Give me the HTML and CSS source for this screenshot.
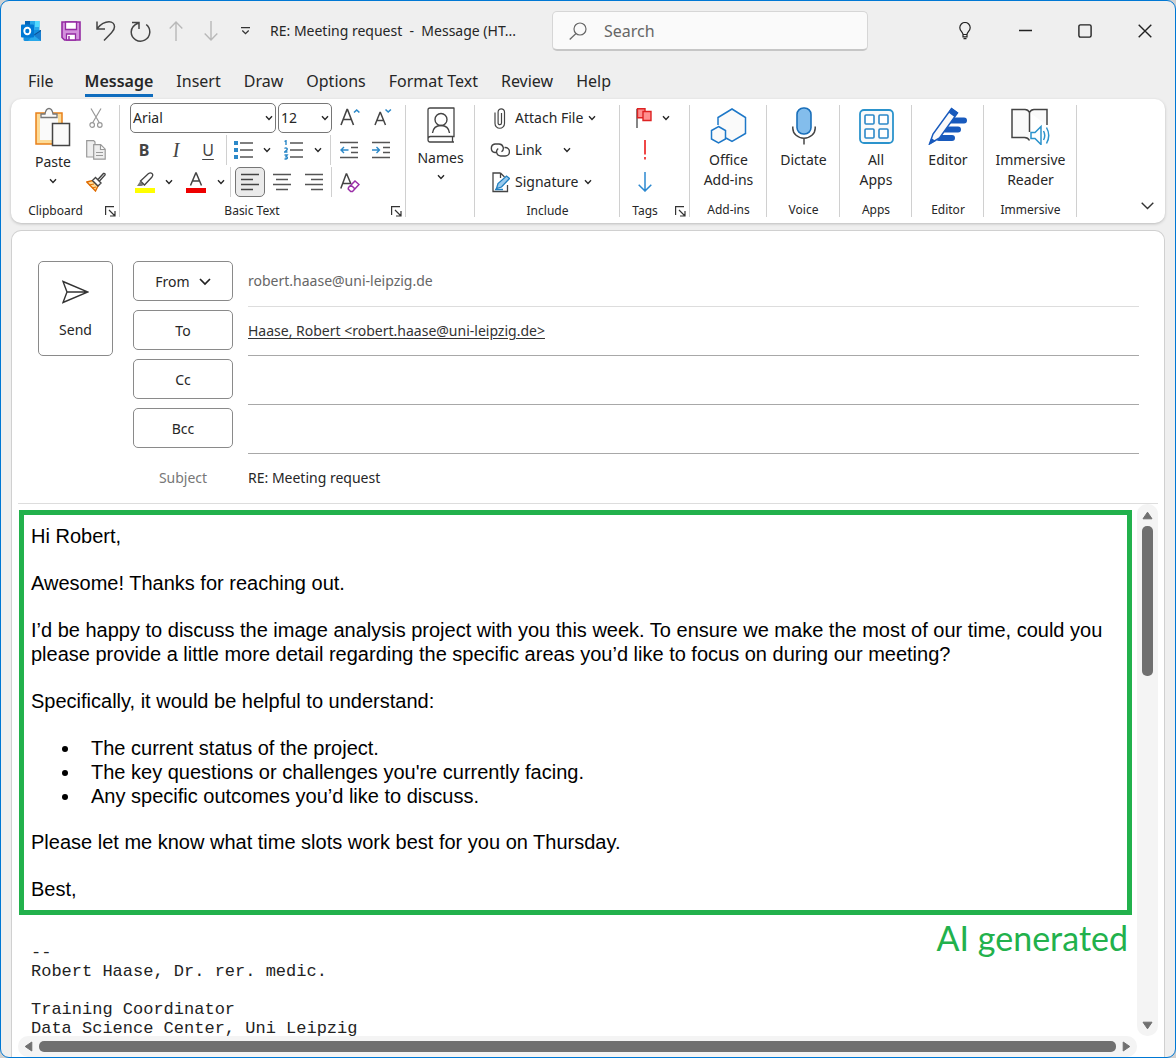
FILE: index.html
```html
<!DOCTYPE html>
<html lang="en">
<head>
<meta charset="utf-8">
<title>RE: Meeting request - Message (HTML)</title>
<meta name="viewport" content="width=device-width, initial-scale=1">
<link rel="stylesheet" href="styles.css">
</head>
<body>
<svg class="defs" aria-hidden="true">
  <symbol id="chev" viewBox="0 0 8 6"><path d="M1 1.2 4 4.4 7 1.2" fill="none" stroke="currentColor" stroke-width="1.4"/></symbol>
  <symbol id="launch" viewBox="0 0 11 11"><path d="M.6 9V.6H9M4 4l5.500 5.500M10 5v5H5" fill="none" stroke="#333" stroke-width="1.200"/></symbol>
</svg>
<div class="window">
  <header class="titlebar">
    <span class="app-icon"><svg width="20" height="20" viewBox="0 0 20 20"><path d="M4 1Q4 0 5 0H18.500V10H4z" fill="#28a8ea"/><path d="M4 0H9V5H4z" fill="#0364b8"/><path d="M14 0h4.500v6H14z" fill="#50d9ff"/><path d="M2.500 9H20V20H4Q2.500 20 2.500 18.500z" fill="#1490df"/><path d="M20 9 12 14 20 20z" fill="#1a7fd0"/><path d="M13 13.500 20 9v1l-6 4z" fill="#0a4f91"/><path d="M12 14 20 20H7z" fill="#28a8ea"/><rect y="3.500" width="13" height="13" rx="1" fill="#0078d4"/><ellipse cx="6.300" cy="10" rx="3" ry="3.300" fill="none" stroke="#fff" stroke-width="1.900"/></svg></span>
    <button class="qat" aria-label="Save"><svg width="20" height="20" viewBox="0 0 20 20"><path d="M1 1H19V19H3.500L1 16.500z" fill="#d391dc" stroke="#952ba3" stroke-width="1.600"/><path d="M4.500 1H15.500V8.500H4.500zM5.500 19V13H14.500V19z" fill="#fff" stroke="#952ba3" stroke-width="1.300"/><path d="M8 15v4" stroke="#952ba3" stroke-width="1.500"/></svg></button>
    <button class="qat" aria-label="Undo"><svg width="20" height="20" viewBox="0 0 20 20"><path d="M1 .5V8H9M1.200 7.500C5 3 9 .8 13 .8c3.500 0 5.500 2.500 5.500 5 0 3-1.500 4.500-3 6L8 19.500" fill="none" stroke="#444" stroke-width="1.500"/></svg></button>
    <button class="qat" aria-label="Redo"><svg width="22" height="21" viewBox="0 0 22 21"><path d="M2 1.500H9V8M8.500 2C3.500 4 1.200 7 1.200 11a9.300 9.300 0 1 0 15-7.500" fill="none" stroke="#444" stroke-width="1.500"/></svg></button>
    <button class="qat" aria-label="Previous item"><svg width="14" height="20" viewBox="0 0 14 20"><path d="M7 20V1M.7 7.500 7 1l6.300 6.500" fill="none" stroke="#b8b8b8" stroke-width="1.400"/></svg></button>
    <button class="qat" aria-label="Next item"><svg width="14" height="20" viewBox="0 0 14 20"><path d="M7 0v19M.7 12.500 7 19l6.300-6.500" fill="none" stroke="#b8b8b8" stroke-width="1.400"/></svg></button>
    <button class="qat" aria-label="Customize toolbar"><svg width="9" height="8" viewBox="0 0 9 8"><path d="M0 .7H9M1.300 3.500 4.500 6.700 7.700 3.500" fill="none" stroke="#333" stroke-width="1.300"/></svg></button>
    <h1 class="title">RE: Meeting request&nbsp; -&nbsp; Message (HT...</h1>
    <label class="search"><svg width="18" height="18" viewBox="0 0 18 18"><circle cx="11" cy="7" r="6" fill="none" stroke="#666" stroke-width="1.200"/><path d="M7 11.500.7 17.500" stroke="#666" stroke-width="1.200"/></svg><input type="text" placeholder="Search" aria-label="Search"></label>
    <nav class="wincontrols" aria-label="Window">
      <button aria-label="Tips"><svg width="12" height="18" viewBox="0 0 12 18"><path d="M4 12.500C4 10 .8 9 .8 5.700a5.200 5.200 0 0 1 10.400 0C11.200 9 8 10 8 12.500zM4 12.500v2.300h4v-2.300M4.500 16.700h3" fill="none" stroke="#222" stroke-width="1.200"/></svg></button>
      <button aria-label="Minimize"><svg width="13" height="14" viewBox="0 0 13 14"><path d="M0 6.500H13" stroke="#222" stroke-width="1.400"/></svg></button>
      <button aria-label="Maximize"><svg width="14" height="14" viewBox="0 0 14 14"><rect x=".9" y=".9" width="12.200" height="12.200" rx="1.500" fill="none" stroke="#222" stroke-width="1.400"/></svg></button>
      <button aria-label="Close"><svg width="14" height="14" viewBox="0 0 14 14"><path d="M.7.7 13.300 13.300M13.300.7.7 13.300" stroke="#222" stroke-width="1.400"/></svg></button>
    </nav>
  </header>

  <nav class="tabs" aria-label="Ribbon tabs">
    <a class="tab file" href="#file">File</a>
    <a class="tab active" href="#message">Message</a>
    <a class="tab" href="#insert">Insert</a>
    <a class="tab" href="#draw">Draw</a>
    <a class="tab" href="#options">Options</a>
    <a class="tab" href="#format">Format Text</a>
    <a class="tab" href="#review">Review</a>
    <a class="tab" href="#help">Help</a>
  </nav>

  <section class="ribbon" aria-label="Message ribbon">
    <div class="group clipboard">
      <div class="group-body">
        <button class="big"><span class="ico"><svg width="36" height="40" viewBox="0 0 36 40"><rect x="1" y="6" width="26" height="31" fill="#fddb97" stroke="#e8801a" stroke-width="1.500"/><path d="M5 9h18v24H5z" fill="#fafafa"/><path d="M6 10.500V7h4c.5-3 2-5.500 4-5.500S17.500 4 18 7h4v3.500z" fill="#fafafa" stroke="#777" stroke-width="1.300"/><rect x="17.500" y="16.500" width="17" height="22" fill="#fafafa" stroke="#444" stroke-width="1.500"/></svg></span><span>Paste</span><svg class="chev"><use href="#chev"/></svg></button>
        <div class="stack">
          <button aria-label="Cut"><svg width="14" height="20" viewBox="0 0 14 20"><path d="M2 .5 10.500 15M12 .5 3.500 15" stroke="#999" stroke-width="1.200"/><circle cx="3.200" cy="17" r="2.300" fill="none" stroke="#999" stroke-width="1.200"/><circle cx="10.800" cy="17" r="2.300" fill="none" stroke="#999" stroke-width="1.200"/></svg></button>
          <button aria-label="Copy"><svg width="20" height="20" viewBox="0 0 20 20"><path d="M.7.7h7L9 2v15H.7z" fill="#eee" stroke="#999" stroke-width="1.200"/><path d="M7.700 4.700h7l4.500 4.500v10H7.700zM14.500 5v4.500H19M10 12.500h7M10 15.500h7" fill="#eee" stroke="#999" stroke-width="1.200"/></svg></button>
          <button aria-label="Format Painter"><svg width="20" height="20" viewBox="0 0 20 20"><path d="M.8 10 6.500 8.500 12 14 9.500 19z" fill="#fddb97" stroke="#e06c00" stroke-width="1.400"/><path d="M3 13 8 12M6 16l4-1" stroke="#e06c00"/><path d="M6.500 8.500 9.500 5.500 15 11 12 14zM12 7.500 17.500 1.500q2-.5 1.500 1.500L13.500 9" fill="#fff" stroke="#444" stroke-width="1.400"/></svg></button>
        </div>
      </div>
      <footer class="group-foot"><span>Clipboard</span><button class="launch" aria-label="Clipboard options"><svg width="11" height="11"><use href="#launch"/></svg></button></footer>
    </div>

    <div class="group basic">
      <div class="group-body rows">
        <div class="row fonts">
          <span class="pick"><select aria-label="Font"><option>Arial</option></select><svg class="chev"><use href="#chev"/></svg></span>
          <span class="pick"><select aria-label="Font size"><option>12</option></select><svg class="chev"><use href="#chev"/></svg></span>
          <button aria-label="Grow font"><svg width="20" height="20" viewBox="0 0 20 20"><path d="M1 17 7 1.500h.5L13.500 17M3.200 11.500h8" fill="none" stroke="#444" stroke-width="1.600"/><path d="M14 4.500 16.700 2l2.700 2.500" fill="none" stroke="#2b88c8" stroke-width="1.600"/></svg></button>
          <button class="shrink" aria-label="Shrink font"><svg width="18" height="20" viewBox="0 0 18 20"><path d="M1 17 6 4.500h.4L11.500 17M2.800 12.500h7" fill="none" stroke="#444" stroke-width="1.500"/><path d="M11.500 1.500 14.200 4l2.700-2.500" fill="none" stroke="#2b88c8" stroke-width="1.600"/></svg></button>
        </div>
        <div class="row marks">
          <button class="letter bold">B</button>
          <button class="letter italic">I</button>
          <button class="letter under">U</button>
          <i class="sep"></i>
          <button aria-label="Bullets"><svg width="20" height="20" viewBox="0 0 20 20"><path d="M0 1h4v4H0zM0 8h4v4H0zM0 15h4v4H0z" fill="#2b88c8"/><path d="M6 3h13M6 10h13M6 17h13" stroke="#555" stroke-width="1.400"/></svg></button>
          <button aria-label="Bullet styles"><svg class="chev"><use href="#chev"/></svg></button>
          <button aria-label="Numbering"><svg width="20" height="20" viewBox="0 0 20 20"><path d="M.5 1.500 2 .7V5M.5 8.500q1.500-1.300 2.500 0T.5 12H3.500M.5 15h2.700L2 16.700q1.500 0 1.400 1.200T.5 19" fill="none" stroke="#2b88c8" stroke-width="1.400"/><path d="M6 3h13M6 10h13M6 17h13" stroke="#555" stroke-width="1.400"/></svg></button>
          <button aria-label="Numbering styles"><svg class="chev"><use href="#chev"/></svg></button>
          <i class="sep"></i>
          <button aria-label="Decrease indent"><svg width="18" height="18" viewBox="0 0 18 18"><path d="M0 1.500h18M11 6.500h7M11 11.500h7M0 16.500h18" stroke="#555" stroke-width="1.400"/><path d="M8.500 9H1M4 6 1 9l3 3" fill="none" stroke="#2b88c8" stroke-width="1.400"/></svg></button>
          <button aria-label="Increase indent"><svg width="18" height="18" viewBox="0 0 18 18"><path d="M0 1.500h18M11 6.500h7M11 11.500h7M0 16.500h18" stroke="#555" stroke-width="1.400"/><path d="M0 9h7.500M4.500 6l3 3-3 3" fill="none" stroke="#2b88c8" stroke-width="1.400"/></svg></button>
        </div>
        <div class="row aligns">
          <button aria-label="Highlight"><svg width="20" height="21" viewBox="0 0 20 21"><path d="M0 16h20v5H0z" fill="#ff0"/><path d="M2 14 5 9.500 9 13 6.500 14z" fill="#777"/><path d="M5.500 9 13.500 1.500q2-1.300 3.500 0t0 3.500L9.500 13z" fill="#fff" stroke="#444" stroke-width="1.300"/></svg></button>
          <button aria-label="Highlight colors"><svg class="chev"><use href="#chev"/></svg></button>
          <button aria-label="Font color"><svg width="20" height="21" viewBox="0 0 20 21"><path d="M0 16h20v5H0z" fill="#e00"/><path d="M4.500 13.500 9.800 1h.4l5.300 12.500M6.500 9h7" fill="none" stroke="#444" stroke-width="1.500"/></svg></button>
          <button aria-label="Font colors"><svg class="chev"><use href="#chev"/></svg></button>
          <i class="sep"></i>
          <button class="pressed" aria-label="Align left" aria-pressed="true"><svg width="18" height="18" viewBox="0 0 18 18"><path d="M0 1.500h18M0 6.500h12M0 11.500h18M0 16.500h12" stroke="#444" stroke-width="1.400"/></svg></button>
          <button aria-label="Center"><svg width="18" height="18" viewBox="0 0 18 18"><path d="M0 1.500h18M3 6.500h12M0 11.500h18M3 16.500h12" stroke="#555" stroke-width="1.400"/></svg></button>
          <button aria-label="Align right"><svg width="18" height="18" viewBox="0 0 18 18"><path d="M0 1.500h18M6 6.500h12M0 11.500h18M6 16.500h12" stroke="#555" stroke-width="1.400"/></svg></button>
          <i class="sep"></i>
          <button aria-label="Clear formatting"><svg width="20" height="21" viewBox="0 0 20 21"><path d="M.8 16.500 6.200 2h.5L11 12M3 11.500h7" fill="none" stroke="#444" stroke-width="1.500"/><path d="m8.500 15.500 6.500-6.500 4 3.500-6.500 7h-1.800l-2.500-2.500zM11 13l4 4" fill="#fff" stroke="#9b30a8" stroke-width="1.500"/></svg></button>
        </div>
      </div>
      <footer class="group-foot"><span>Basic Text</span><button class="launch" aria-label="Basic text options"><svg width="11" height="11"><use href="#launch"/></svg></button></footer>
    </div>

    <div class="group names">
      <div class="group-body">
        <button class="big"><span class="ico"><svg width="28" height="36" viewBox="0 0 28 36"><path d="M27 1H3Q1 1 1 3v29.500Q1 35 3 35H27M27 .5V29.500H3.500Q1 29.500 1 32.300M25.500 30v5" fill="none" stroke="#444" stroke-width="1.300"/><circle cx="14" cy="12.500" r="6" fill="none" stroke="#444" stroke-width="1.400"/><path d="M5.500 26q1-7.500 8.500-7.500T22.500 26" fill="none" stroke="#444" stroke-width="1.400"/></svg></span><span>Names</span><svg class="chev"><use href="#chev"/></svg></button>
      </div>
    </div>

    <div class="group include">
      <div class="group-body rows">
        <button class="line"><svg width="20" height="21" viewBox="0 0 20 21"><path d="M5 4.500v11a4.700 4.700 0 0 0 9.500 0V4a3.200 3.200 0 0 0-6.400 0v11a1.700 1.700 0 0 0 3.400 0V5" fill="none" stroke="#444" stroke-width="1.200"/></svg><span>Attach File</span><svg class="chev"><use href="#chev"/></svg></button>
        <button class="line link"><svg width="20" height="14" viewBox="0 0 20 14"><path d="M6 9.500H5A4.300 4.300 0 0 1 5 1h4a4.300 4.300 0 0 1 2.500 7.800M14.500 4.500h.7a4.200 4.200 0 0 1 0 8.500h-4.500a4.200 4.200 0 0 1-2.500-7.500" fill="none" stroke="#444" stroke-width="1.400"/></svg><span>Link</span><svg class="chev"><use href="#chev"/></svg></button>
        <button class="line"><svg width="20" height="21" viewBox="0 0 20 21"><path d="M10.500 1H3v18.500h14.500V13M10.500 1l4 4M10.500 1v5" fill="none" stroke="#444" stroke-width="1.300"/><path d="M6.500 16.500 8 11.500 16.500 4 19.500 6.500 11.500 15z" fill="#9bcbee" stroke="#2380c0" stroke-width="1.300"/><path d="M5 17.500h8" stroke="#2380c0" stroke-width="1.400"/></svg><span>Signature</span><svg class="chev"><use href="#chev"/></svg></button>
      </div>
      <footer class="group-foot"><span>Include</span></footer>
    </div>

    <div class="group tags">
      <div class="group-body rows">
        <div class="row flagrow"><button aria-label="Follow up"><svg width="16" height="20" viewBox="0 0 16 20"><path d="M1 1v19" stroke="#444" stroke-width="1.300"/><path d="M1.500.8h7.500v9H1.500z" fill="#ff8f8f" stroke="#d22" stroke-width="1.400"/><path d="M7 3.500h8v9H7z" fill="#ff8f8f" stroke="#d22" stroke-width="1.400"/></svg></button><button aria-label="Follow up options"><svg class="chev"><use href="#chev"/></svg></button></div>
        <button class="tag" aria-label="High importance"><svg width="16" height="20" viewBox="0 0 16 20"><path d="M8 0v14.500M8 17v2.500" stroke="#e33" stroke-width="1.800"/></svg></button>
        <button class="tag" aria-label="Low importance"><svg width="14" height="20" viewBox="0 0 14 20"><path d="M7 0v19M.7 12.700 7 19l6.300-6.300" fill="none" stroke="#2b88d0" stroke-width="1.500"/></svg></button>
      </div>
      <footer class="group-foot"><span>Tags</span><button class="launch" aria-label="Tag options"><svg width="11" height="11"><use href="#launch"/></svg></button></footer>
    </div>

    <div class="group addins">
      <div class="group-body"><button class="big"><span class="ico"><svg width="37" height="36" viewBox="0 0 37 36"><path d="M8 17V9.500L22 1l13.500 8.500v16L22 33.500 16 30" fill="#fafafa" stroke="#1e78c8" stroke-width="1.500"/><path d="m8.500 18.500 7 4v8.500l-7 4-7-4v-8.500z" fill="#fafafa" stroke="#1e78c8" stroke-width="1.500"/></svg></span><span>Office<br>Add-ins</span></button></div>
      <footer class="group-foot"><span>Add-ins</span></footer>
    </div>
    <div class="group voice">
      <div class="group-body"><button class="big"><span class="ico"><svg width="24" height="38" viewBox="0 0 24 38"><rect x="5" y="1" width="14" height="26" rx="6.500" fill="#83bdec" stroke="#1a6fba" stroke-width="1.600"/><path d="M.8 19.500v1.700a11.200 10 0 0 0 22.400 0v-1.700M12 31v6.500" fill="none" stroke="#444" stroke-width="1.500"/></svg></span><span>Dictate</span></button></div>
      <footer class="group-foot"><span>Voice</span></footer>
    </div>
    <div class="group apps">
      <div class="group-body"><button class="big"><span class="ico"><svg width="35" height="35" viewBox="0 0 35 35"><rect x="1" y="1" width="33" height="33" rx="4" fill="#fafafa" stroke="#2b93cc" stroke-width="1.800"/><g fill="#fff" stroke="#2b88c8" stroke-width="1.600"><rect x="6" y="6" width="9" height="9" rx="1"/><rect x="20" y="6" width="9" height="9" rx="1"/><rect x="6" y="20" width="9" height="9" rx="1"/><rect x="20" y="20" width="9" height="9" rx="1"/></g></svg></span><span>All<br>Apps</span></button></div>
      <footer class="group-foot"><span>Apps</span></footer>
    </div>
    <div class="group editor-group">
      <div class="group-body"><button class="big"><span class="ico"><svg width="40" height="38" viewBox="0 0 40 38"><path d="M23 13.500h13M17 22.500h13M11 31h13" stroke="#185abd" stroke-width="6" stroke-linecap="round"/><path d="M1.500 37 5 27 23.500 1.500 29.500 6 11.500 31z" fill="#fafafa" stroke="#185abd" stroke-width="1.500"/><path d="m20.500 5.500 3-4.500 6.500 4.500-3.500 4.500zM1.200 37.500l2-6.500 4.500 3z" fill="#185abd"/></svg></span><span>Editor</span></button></div>
      <footer class="group-foot"><span>Editor</span></footer>
    </div>
    <div class="group immersive">
      <div class="group-body"><button class="big"><span class="ico"><svg width="39" height="37" viewBox="0 0 39 37"><path d="M18.500 24V4.500Q17 1.500 14 1.500H1v28h12.500q3.500 0 5 3M18.500 4.500Q20 1.500 23 1.500H36V17" fill="#fafafa" stroke="#444" stroke-width="1.500"/><path d="M20 24.500h4l6-6v18l-6-6h-4z" fill="#fff" stroke="#2b93cc" stroke-width="1.500"/><path d="M32.500 23q2.500 4.500 0 9M35.500 19.500q4.500 8 0 16" fill="none" stroke="#2b93cc" stroke-width="1.500"/></svg></span><span>Immersive<br>Reader</span></button></div>
      <footer class="group-foot"><span>Immersive</span></footer>
    </div>
    <button class="collapse" aria-label="Collapse ribbon"><svg width="13" height="8" viewBox="0 0 13 8"><path d="M.7.700 6.500 6.500 12.300.7" fill="none" stroke="#333" stroke-width="1.400"/></svg></button>
  </section>

  <main class="message">
    <form class="head">
      <button type="button" class="box send"><svg width="27" height="24" viewBox="0 0 27 24"><path d="M1 1.500 26 12 1 22.500 5 12zM5 12h20" fill="none" stroke="#333" stroke-width="1.400"/></svg><span>Send</span></button>
      <div class="fields">
        <button type="button" class="box from">From <svg width="12" height="8" viewBox="0 0 12 8"><path d="M1 1l5 5 5-5" fill="none" stroke="#222" stroke-width="1.700"/></svg></button>
        <output class="value sender">robert.haase@uni-leipzig.de</output>
        <button type="button" class="box">To</button>
        <div class="value"><a href="#recipient">Haase, Robert &lt;robert.haase@uni-leipzig.de&gt;</a></div>
        <button type="button" class="box">Cc</button>
        <input class="value" type="text" aria-label="Cc">
        <button type="button" class="box">Bcc</button>
        <input class="value" type="text" aria-label="Bcc">
        <label class="subject" for="subject">Subject</label>
        <input class="value last" id="subject" type="text" value="RE: Meeting request">
      </div>
    </form>
    <div class="editor">
      <article class="body">
        <section class="generated">
          <p>Hi Robert,</p>
          <p>Awesome! Thanks for reaching out.</p>
          <p>I’d be happy to discuss the image analysis project with you this week. To ensure we make the most of our time, could you please provide a little more detail regarding the specific areas you’d like to focus on during our meeting?</p>
          <p>Specifically, it would be helpful to understand:</p>
          <ul>
            <li>The current status of the project.</li>
            <li>The key questions or challenges you're currently facing.</li>
            <li>Any specific outcomes you’d like to discuss.</li>
          </ul>
          <p>Please let me know what time slots work best for you on Thursday.</p>
          <p>Best,</p>
        </section>
        <div class="after">
          <pre class="signature">--
Robert Haase, Dr. rer. medic.

Training Coordinator
Data Science Center, Uni Leipzig</pre>
          <span class="caption">AI generated</span>
        </div>
      </article>
      <div class="scroll vertical"><svg width="11" height="9" viewBox="0 0 11 9"><path d="M5.500 1.200 10 7.800H1z" fill="#707070" stroke="#707070" stroke-linejoin="round"/></svg><i class="thumb"></i><svg class="end" width="11" height="9" viewBox="0 0 11 9"><path d="M5.500 7.800 10 1.200H1z" fill="#707070" stroke="#707070" stroke-linejoin="round"/></svg></div>
      <div class="scroll horizontal"><svg width="9" height="11" viewBox="0 0 9 11"><path d="M1.200 5.500 7.800 1v9z" fill="#707070" stroke="#707070" stroke-linejoin="round"/></svg><i class="thumb"></i><svg width="9" height="11" viewBox="0 0 9 11"><path d="M7.800 5.500 1.200 1v9z" fill="#707070" stroke="#707070" stroke-linejoin="round"/></svg></div>
    </div>
  </main>
</div>
</body>
</html>
```
FILE: styles.css
```css
* { box-sizing: border-box; }

body {
  margin: 0;
  background: #d0d0d0;
  color: #262626;
  font: 14px/20px "Noto Sans", "Open Sans", sans-serif;
}

button, input, select { font: inherit; color: inherit; }

button {
  display: flex;
  align-items: center;
  justify-content: center;
  padding: 0;
  border: 0;
  background: none;
}

svg { flex: none; display: block; }
.defs { position: absolute; width: 0; height: 0; }
.chev { width: 8px; height: 6px; }

.window {
  display: flex;
  flex-direction: column;
  height: 100vh;
  border: 1px solid #0078d4;
  border-radius: 9px;
  background: #efefef;
  overflow: hidden;
}

/* Title bar */
.titlebar {
  display: flex;
  align-items: center;
  height: 60px;
  padding-left: 12px;
}
.app-icon { display: grid; place-items: center; width: 36px; margin-right: 4px; }
.qat { width: 35px; height: 32px; }
.title {
  flex: 0 1 282px;
  margin: 0 0 0 7px;
  font-size: 14px;
  font-weight: 400;
  white-space: nowrap;
}
.search {
  display: flex;
  align-items: center;
  gap: 17px;
  flex: 0 1 316px;
  min-width: 0;
  height: 40px;
  padding: 0 16px;
  border: 1px solid #d6d6d6;
  border-bottom: 2px solid #c6c6c6;
  border-radius: 5px;
  background: #fafafa;
}
.search input { flex: 1; min-width: 0; padding: 0; border: 0; background: none; font-size: 16px; }
.search input::placeholder { color: #666; opacity: 1; }
.wincontrols { display: flex; margin-left: auto; }
.wincontrols button { width: 60px; height: 40px; }

/* Tabs */
.tabs {
  display: flex;
  gap: 23px;
  height: 38px;
  padding: 6px 27px 0;
  font-size: 16px;
}
.tab { height: 30px; line-height: 28px; color: #262626; text-decoration: none; white-space: nowrap; }
.tab.file { margin-right: 8px; }
.tab.active { font-weight: 600; border-bottom: 3px solid #0f6cbd; }

/* Ribbon */
.ribbon {
  display: flex;
  height: 124px;
  margin: 0 10px 7px;
  border-radius: 10px;
  background: #fff;
  box-shadow: 0 1px 3px #bbb;
}
.group {
  position: relative;
  display: flex;
  flex-direction: column;
  flex: none;
  padding-top: 3px;
}
.group::after {
  content: "";
  position: absolute;
  right: 0;
  top: 6px;
  bottom: 6px;
  width: 1px;
  background: #d0d0d0;
}
.group-body { display: flex; height: 96px; }
.rows { flex-direction: column; }
.group-foot {
  position: relative;
  display: flex;
  justify-content: center;
  font-size: 12px;
  line-height: 26px;
}
.launch { position: absolute; right: 4px; top: 8px; }
.clipboard { width: 109px; }
.clipboard .group-foot, .tags .group-foot { padding-right: 20px; }
.basic .group-foot { padding-right: 22px; }
.basic { width: 286px; }
.names { width: 69px; }
.include { width: 145px; }
.tags { width: 70px; }
.addins { width: 77px; }
.voice { width: 73px; }
.apps { width: 72px; }
.editor-group { width: 72px; }
.immersive { width: 93px; }

.big { flex: 1; flex-direction: column; justify-content: flex-start; }
.big .ico { display: grid; place-items: center; height: 48px; }
.big .chev { margin-top: 6px; }
.clipboard .big { padding-left: 23px; }
.clipboard .ico { height: 50px; }
.names .ico { height: 46px; }
.stack { display: grid; grid-template-rows: repeat(3, 32px); width: 48px; }

.row { display: grid; height: 32px; align-items: center; }
.row button { height: 30px; }
.fonts { grid-template-columns: 146px 54px 32px 30px; column-gap: 2px; padding-left: 10px; }
.pick { position: relative; }
.pick select {
  appearance: none;
  display: block;
  width: 100%;
  height: 30px;
  padding: 0 2px;
  border: 1px solid #767676;
  border-radius: 5px;
  background: #fff;
}
.pick .chev { position: absolute; right: 3px; top: 12px; }
.marks { grid-template-columns: 32px 32px 32px 5px 30px 16px 38px 10px 14px 24px 40px; padding-left: 8px; }
.aligns { grid-template-columns: 34px 14px 40px 10px 9px 30px 34px 30px 5px 32px; padding-left: 8px; }
.sep { justify-self: center; width: 1px; height: 30px; background: #d0d0d0; }
.letter { font-size: 16px; color: #444; }
.bold { font-weight: 700; }
.italic { font-family: "Liberation Serif", serif; font-style: italic; font-size: 20px; }
.under { text-decoration: underline; text-underline-offset: 3px; }
.pressed { border: 1px solid #767676; border-radius: 5px; background: #ebebeb; }

.line { justify-content: flex-start; gap: 5px; height: 32px; padding-left: 15px; }
.link .chev { margin-left: 16px; }
.flagrow { grid-template-columns: 32px 12px; padding-left: 8px; }
.tag { width: 32px; height: 32px; margin-left: 9px; }
.collapse { align-self: flex-end; width: 36px; height: 34px; margin-left: auto; }

/* Message header */
.message {
  display: flex;
  flex-direction: column;
  flex: 1;
  min-height: 0;
  margin: 0 10px;
  border: 1px solid #d0d0d0;
  border-bottom: 0;
  border-radius: 10px 10px 0 0;
  background: #fff;
}
.head {
  display: flex;
  align-items: flex-start;
  gap: 20px;
  margin: 0 6px;
  padding: 30px 19px 0 20px;
  border-bottom: 1px solid #ddd;
}
.box { border: 1px solid #8a8a8a; border-radius: 5px; background: #fff; }
.send { flex: none; flex-direction: column; gap: 16px; width: 75px; height: 95px; padding-top: 2px; }
.fields {
  display: grid;
  grid-template-columns: 100px 1fr;
  grid-template-rows: repeat(4, 49px) 46px;
  column-gap: 15px;
  flex: 1;
  min-width: 0;
}
.fields .box { height: 40px; padding-top: 1px; }
.from { gap: 9px; }
.value {
  width: 100%;
  height: 46px;
  padding: 0;
  border: 0;
  border-bottom: 1px solid #a8a8a8;
  background: none;
  line-height: 42px;
}
.value a { color: #333; text-underline-offset: 2px; }
.sender { color: #666; border-color: #ddd; line-height: 40px; }
.last { height: 42px; border: 0; }
.subject { color: #777; line-height: 42px; text-align: center; }

/* Message body */
.editor {
  display: grid;
  grid-template: minmax(0, 1fr) 21px / minmax(0, 1fr) 21px;
  flex: 1;
  min-height: 0;
  margin: 0 6px;
}
.body {
  overflow: hidden;
  padding: 6px 5px 0 1px;
  color: #000;
  font: 20px/24px "Liberation Sans", Arial, sans-serif;
}
.generated { padding: 9px 7px; border: 5px solid #22b14c; }
.generated p { margin: 0 0 23px; }
.generated p:last-child { margin: 0; }
.generated ul { margin: 0 0 22px; padding-left: 50px; }
.generated li { padding-left: 10px; }
.after { display: flex; justify-content: space-between; align-items: flex-start; padding: 0 4px 0 12px; }
.signature { margin: 28px 0 0; font: 17px/19px "Liberation Mono", "Courier New", monospace; color: #222; }
.caption { margin-top: 2px; color: #22b14c; font: 34px/42px Lato, sans-serif; }

.scroll { display: flex; align-items: center; background: #f4f4f4; border-radius: 10px; }
.thumb { border-radius: 5px; background: #707070; }
.vertical { flex-direction: column; padding: 7px 0 6px; }
.vertical .thumb { width: 11px; height: 150px; margin-top: 6px; }
.vertical .end { margin-top: auto; }
.horizontal { gap: 6px; padding: 0 6px; }
.horizontal .thumb { flex: 1; height: 11px; }
```
